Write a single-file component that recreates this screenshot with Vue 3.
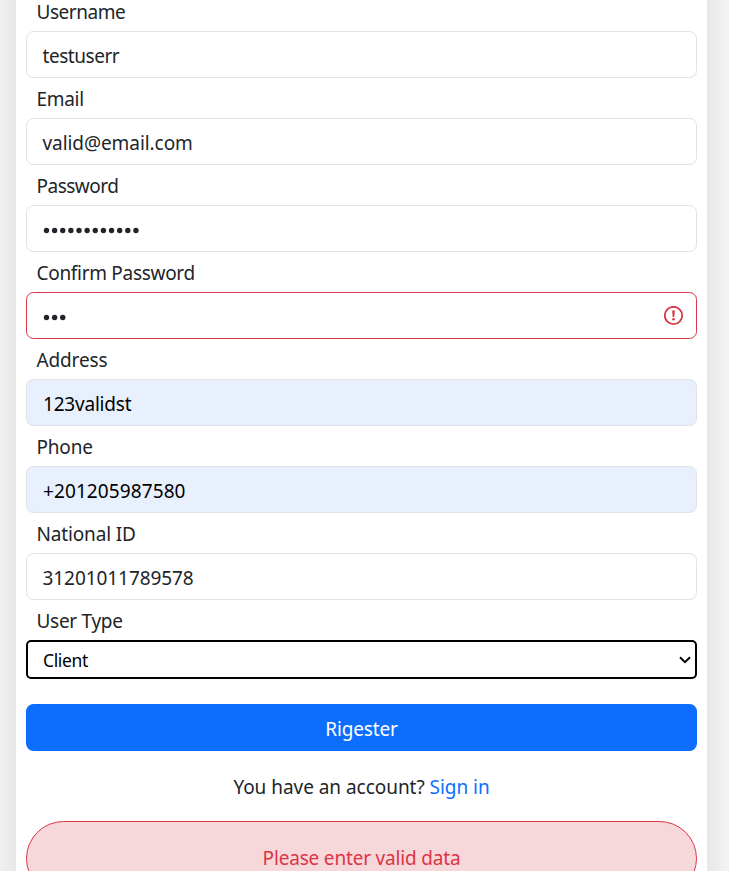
<script setup>
const fields = [
  { label: 'Username', value: 'testuserr', k: 'username' },
  { label: 'Email', value: 'valid@email.com', k: 'email' },
  { label: 'Password', value: '', dots: 12, k: 'password' },
  { label: 'Confirm Password', value: '', dots: 3, invalid: true, k: 'confirm' },
  { label: 'Address', value: '123validst', filled: true, k: 'address' },
  { label: 'Phone', value: '+201205987580', filled: true, k: 'phone' },
  { label: 'National ID', value: '31201011789578', k: 'national' },
]
</script>

<template>
  <div class="page">
    <main class="card">
      <div v-for="f in fields" :key="f.label" :class="['field', f.k]">
        <div class="label"><span>{{ f.label }}</span></div>
        <div class="input" :class="{ invalid: f.invalid, filled: f.filled }">
          <svg v-if="f.dots" class="dots" viewBox="0 0 100 8" width="100" height="8">
            <circle v-for="n in f.dots" :key="n" :cx="4.5 + (n - 1) * 8.13" cy="4.5" r="2.7" fill="#212529" />
          </svg>
          <span v-else class="value">{{ f.value }}</span>
          <svg v-if="f.invalid" class="warn" viewBox="0 0 20 20" width="20" height="20">
            <circle cx="9.5" cy="9.5" r="8.7" fill="none" stroke="#dc3545" stroke-width="1.8" />
            <path d="M8.1 4.5h2.8l-.6 6.5H8.7z" fill="#dc3545" />
            <circle cx="9.5" cy="13.2" r="1.25" fill="#dc3545" />
          </svg>
        </div>
      </div>
      <div class="field usertype">
        <div class="label"><span>User Type</span></div>
        <div class="select">
          <span class="value">Client</span>
          <svg viewBox="0 0 12 8" width="12" height="8">
            <path d="M1 1.2l5 5 5-5" fill="none" stroke="#000" stroke-width="2" />
          </svg>
        </div>
      </div>
      <button class="submit"><span>Rigester</span></button>
      <p class="account"><span>You have an account? <a>Sign in</a></span></p>
      <div class="alert"><span>Please enter valid data</span></div>
    </main>
  </div>
</template>

<style>
body {
  margin: 0;
  background: #fff;
}
</style>

<style scoped>
.page {
  height: 871px;
  overflow: hidden;
  padding: 0 22px 0 16px;
  font-family: "Noto Sans", sans-serif;
  font-size: 19px;
  line-height: 30px;
  color: #212529;
  box-sizing: border-box;
}
.card {
  margin-top: -209px;
  padding: 200px 10px 200px;
  background: #fff;
  box-shadow: 0 0 60px rgba(0, 0, 0, 0.19);
  display: flex;
  flex-direction: column;
}
.label {
  height: 40px;
  line-height: 43px;
  padding-left: 10.5px;
  box-sizing: border-box;
  white-space: nowrap;
}
.input {
  height: 47px;
  box-sizing: border-box;
  border: 1px solid #dee2e6;
  border-radius: 7.5px;
  padding: 3px 12px 0 15.5px;
  display: flex;
  align-items: center;
  justify-content: space-between;
}
.input.filled {
  background: #e8f0fe;
  color: #000;
  padding-left: 16px;
}
.input.invalid {
  border-color: #dc3545;
}
.username .label,
.username .value {
  letter-spacing: -0.45px;
}
.email .label {
  letter-spacing: -0.3px;
}
.email .value {
  letter-spacing: -0.07px;
}
.password .label {
  letter-spacing: -0.5px;
}
.confirm .label {
  letter-spacing: -0.3px;
}
.address .label {
  letter-spacing: -0.15px;
}
.address .value {
  letter-spacing: -0.2px;
}
.phone .label {
  letter-spacing: -0.2px;
}
.phone .value {
  letter-spacing: 0.1px;
}
.national .label {
  letter-spacing: -0.15px;
}
.national .value {
  letter-spacing: -0.07px;
}
.usertype .label {
  letter-spacing: -0.3px;
}
.usertype .value {
  letter-spacing: -0.35px;
}
.dots {
  margin-left: -0.5px;
}
.warn {
  margin-top: -3px;
}
.select {
  height: 39px;
  box-sizing: border-box;
  border: 2px solid #000;
  border-radius: 5px;
  padding: 0 4px 0 15px;
  display: flex;
  align-items: center;
  justify-content: space-between;
  color: #000;
  font-size: 17.5px;
}
.submit {
  height: 47px;
  margin-top: 25px;
  border: 0;
  border-radius: 7.5px;
  background: #0d6efd;
  color: #fff;
  font: inherit;
  letter-spacing: -0.15px;
  padding: 2px 0 0;
}
.account {
  margin: 21px 0 19px;
  text-align: center;
  letter-spacing: -0.04px;
}
.account a {
  color: #0d6efd;
}
.alert {
  height: 75px;
  box-sizing: border-box;
  border: 1px solid #dc3545;
  border-radius: 37.5px;
  background: #f6d7da;
  color: #dc3545;
  text-align: center;
  line-height: 72px;
  letter-spacing: -0.18px;
}
</style>
